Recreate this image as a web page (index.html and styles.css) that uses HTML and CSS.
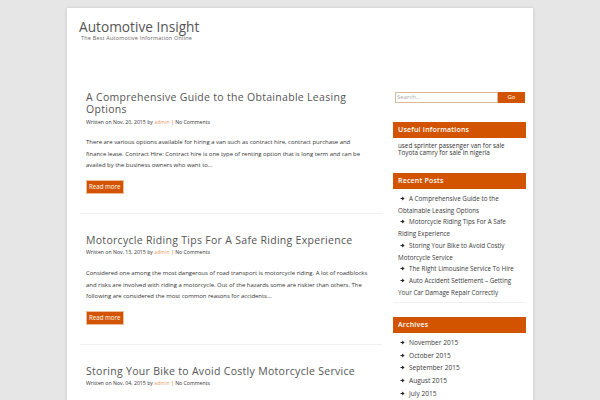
FILE: index.html
```html
<!DOCTYPE html>
<html>
<head>
<meta charset="utf-8">
<link rel="stylesheet" href="styles.css">
</head>
<body>
<div class="page">
  <header class="site-header">
    <div class="site-title">Automotive Insight</div>
    <div class="site-desc">The Best Automotive Information Online</div>
  </header>
  <div class="layout">
    <main class="content">
      <article class="post">
        <h2 class="post-title">A Comprehensive Guide to the Obtainable Leasing Options</h2>
        <div class="meta">Written on Nov, 20, 2015 by <span class="author">admin</span> <span class="sep">|</span> No Comments</div>
        <p class="excerpt">There are various options available for hiring a van such as contract hire, contract purchase and finance lease. Contract Hire: Contract hire is one type of renting option that is long term and can be availed by the business owners who want to…</p>
        <a class="more">Read more</a>
      </article>
      <article class="post">
        <h2 class="post-title">Motorcycle Riding Tips For A Safe Riding Experience</h2>
        <div class="meta">Written on Nov, 13, 2015 by <span class="author">admin</span> <span class="sep">|</span> No Comments</div>
        <p class="excerpt">Considered one among the most dangerous of road transport is motorcycle riding. A lot of roadblocks and risks are involved with riding a motorcycle. Out of the hazards some are riskier than others. The following are considered the most common reasons for accidents…</p>
        <a class="more">Read more</a>
      </article>
      <article class="post">
        <h2 class="post-title">Storing Your Bike to Avoid Costly Motorcycle Service</h2>
        <div class="meta">Written on Nov, 04, 2015 by <span class="author">admin</span> <span class="sep">|</span> No Comments</div>
      </article>
    </main>
    <aside class="sidebar">
      <div class="search">
        <div class="search-input">Search...</div>
        <div class="search-btn">Go</div>
      </div>
      <section class="widget w-info">
        <h3 class="widget-title">Useful Informations</h3>
        <div class="links">
          <div>used sprinter passenger van for sale</div>
          <div>Toyota camry for sale in nigeria</div>
        </div>
      </section>
      <section class="widget w-recent">
        <h3 class="widget-title">Recent Posts</h3>
        <ul class="list">
          <li><svg class="arrow" viewBox="0 0 10 10"><path d="M1 3.8h3.2V1.2L9.2 5 4.2 8.8V6.2H1z"/></svg>A Comprehensive Guide to the Obtainable Leasing Options</li>
          <li><svg class="arrow" viewBox="0 0 10 10"><path d="M1 3.8h3.2V1.2L9.2 5 4.2 8.8V6.2H1z"/></svg>Motorcycle Riding Tips For A Safe Riding Experience</li>
          <li><svg class="arrow" viewBox="0 0 10 10"><path d="M1 3.8h3.2V1.2L9.2 5 4.2 8.8V6.2H1z"/></svg>Storing Your Bike to Avoid Costly Motorcycle Service</li>
          <li><svg class="arrow" viewBox="0 0 10 10"><path d="M1 3.8h3.2V1.2L9.2 5 4.2 8.8V6.2H1z"/></svg>The Right Limousine Service To Hire</li>
          <li><svg class="arrow" viewBox="0 0 10 10"><path d="M1 3.8h3.2V1.2L9.2 5 4.2 8.8V6.2H1z"/></svg>Auto Accident Settlement – Getting Your Car Damage Repair Correctly</li>
        </ul>
      </section>
      <section class="widget w-archive">
        <h3 class="widget-title">Archives</h3>
        <ul class="list archives">
          <li><svg class="arrow" viewBox="0 0 10 10"><path d="M1 3.8h3.2V1.2L9.2 5 4.2 8.8V6.2H1z"/></svg>November 2015</li>
          <li><svg class="arrow" viewBox="0 0 10 10"><path d="M1 3.8h3.2V1.2L9.2 5 4.2 8.8V6.2H1z"/></svg>October 2015</li>
          <li><svg class="arrow" viewBox="0 0 10 10"><path d="M1 3.8h3.2V1.2L9.2 5 4.2 8.8V6.2H1z"/></svg>September 2015</li>
          <li><svg class="arrow" viewBox="0 0 10 10"><path d="M1 3.8h3.2V1.2L9.2 5 4.2 8.8V6.2H1z"/></svg>August 2015</li>
          <li><svg class="arrow" viewBox="0 0 10 10"><path d="M1 3.8h3.2V1.2L9.2 5 4.2 8.8V6.2H1z"/></svg>July 2015</li>
        </ul>
      </section>
    </aside>
  </div>
</div>
</body>
</html>
```
FILE: styles.css
```css
html, body {
  margin: 0;
  padding: 0;
  height: 100%;
  overflow: hidden;
}
body {
  background: #e6e6e6;
  font-family: "Open Sans", "Liberation Sans", sans-serif;
  color: #555;
}
.page {
  width: 466px;
  margin: 8px auto 0;
  background: #fff;
  min-height: 420px;
  box-shadow: 0 0 3px rgba(0,0,0,0.15);
}
.site-header {
  padding: 11px 0 0 12px;
  height: 80px;
  box-sizing: border-box;
}
.site-title {
  font-size: 13.7px;
  line-height: 16px;
  color: #555;
}
.site-desc {
  font-size: 5.5px;
  line-height: 6px;
  color: #666;
  padding-left: 2px;
  letter-spacing: 0.2px;
}
.layout {
  display: grid;
  grid-template-columns: 302px 133px;
  column-gap: 11px;
  padding-left: 13px;
}
.post {
  padding: 20px 4px 19px 6px;
  border-bottom: 1px solid #f0f0f0;
}
.post:first-child { padding-top: 3px; }
.post-title {
  margin: 0;
  font-weight: 400;
  font-size: 10.5px;
  line-height: 12px;
  letter-spacing: 0.3px;
  color: #555;
}
.meta {
  font-size: 5.2px;
  line-height: 7px;
  margin-top: 3.5px;
  color: #333;
}
.author { color: #e39a66; }
.sep { color: #d35400; }
.excerpt {
  font-size: 5.95px;
  line-height: 11.5px;
  margin: 11.75px 9px 8px 0;
  color: #333;
}
.more {
  display: block;
  width: fit-content;
  background: #d35400;
  color: #fff;
  font-size: 6.2px;
  line-height: 12px;
  padding: 0 2px;
  border: 1px solid #eebc99;
}
.sidebar {
  padding-top: 4px;
}
.search {
  display: flex;
  margin: 0 1px 0 2px;
  height: 11px;
}
.search-input {
  flex: 1;
  border: 1px solid #d9b89e;
  font-size: 6px;
  line-height: 9px;
  color: #aaa;
  padding-left: 1px;
}
.search-btn {
  width: 27px;
  background: #d35400;
  color: #fff;
  font-size: 6px;
  line-height: 11px;
  text-align: center;
}
.w-info { margin-top: 19px; }
.w-recent { margin-top: 17.5px; border-bottom: 1px solid #f0f0f0; padding-bottom: 4px; }
.w-archive { margin-top: 14px; }
.widget-title {
  margin: 0;
  background: #d35400;
  color: #fff;
  font-size: 7px;
  font-weight: 600;
  line-height: 16px;
  padding-left: 5px;
  letter-spacing: 0.2px;
}
.links {
  font-size: 6.3px;
  line-height: 7px;
  padding: 3.5px 0 0 5px;
  color: #333;
}
.list {
  list-style: none;
  margin: 0;
  padding: 4px 4px 0 5px;
  font-size: 6.3px;
  line-height: 11.7px;
  color: #3a3a3a;
}
.archives { padding-top: 3.6px; font-size: 6.6px; }
.archives li { line-height: 12.7px; }
.arrow {
  width: 5px;
  height: 5px;
  fill: #222;
  margin: 0 4px 0 2px;
}
```
